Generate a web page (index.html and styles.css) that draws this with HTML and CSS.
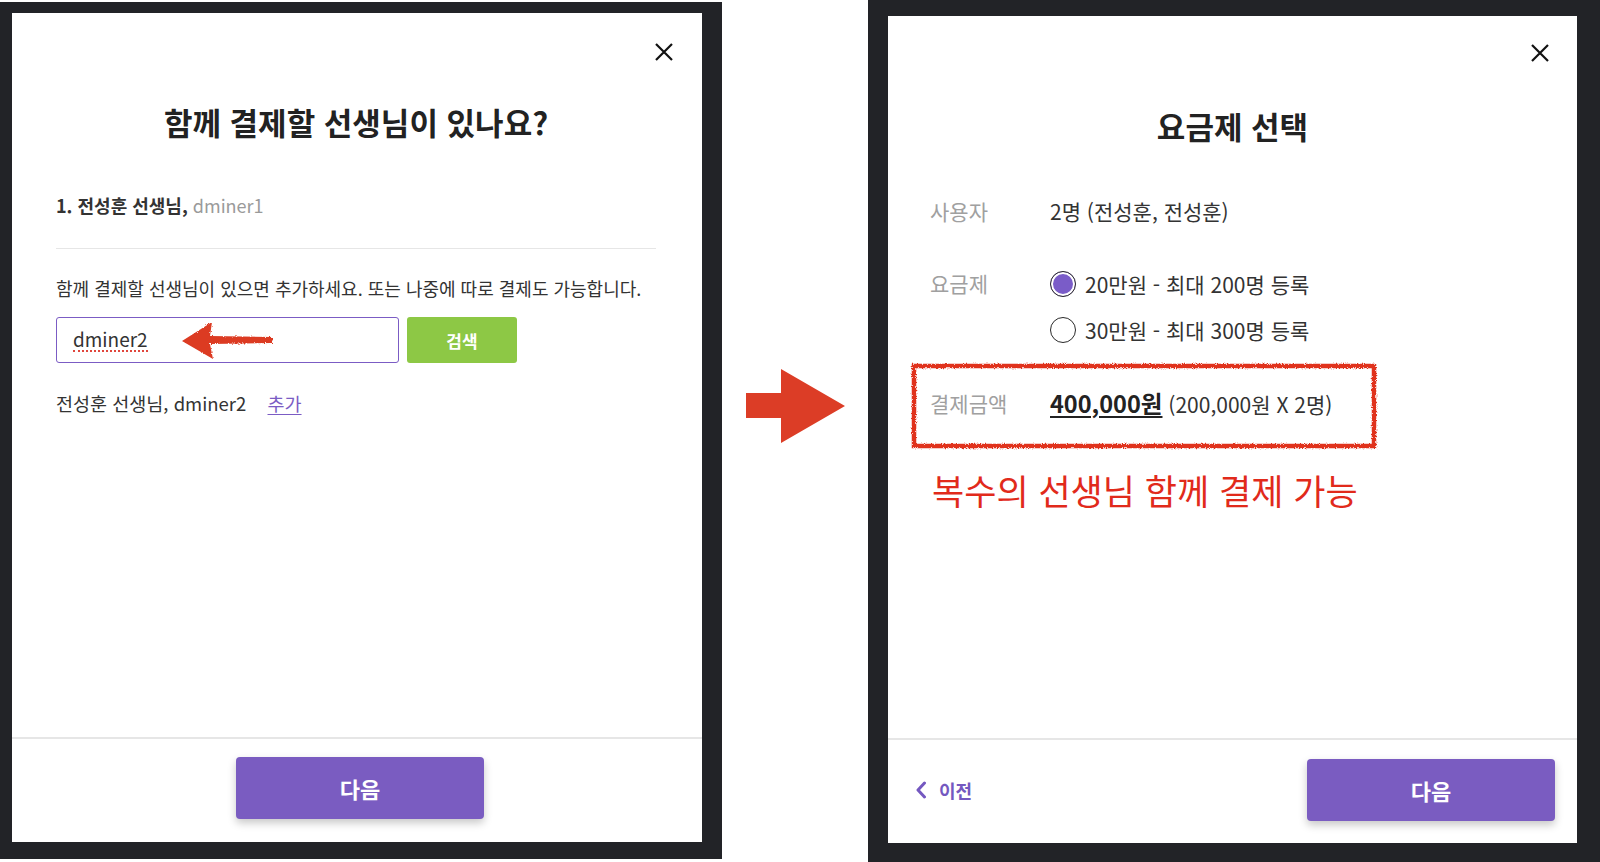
FILE: index.html
```html
<!DOCTYPE html>
<html lang="ko">
<head>
<meta charset="utf-8">
<title>결제</title>
<link rel="stylesheet" href="styles.css">
</head>
<body>
<div class="page">
  <div class="frame frame-left">
    <div class="card">
      <button class="close close-left" aria-label="닫기">
        <svg viewBox="0 0 20 20" width="20" height="20"><path d="M2 2 L18 18 M18 2 L2 18" stroke="#111" stroke-width="2.2" fill="none"/></svg>
      </button>
      <div class="card-body left-body">
        <h1 class="title">함께 결제할 선생님이 있나요?</h1>
        <div class="teacher-row"><strong>1. 전성훈 선생님,</strong> <span class="muted">dminer1</span></div>
        <hr class="divider">
        <p class="desc">함께 결제할 선생님이 있으면 추가하세요. 또는 나중에 따로 결제도 가능합니다.</p>
        <div class="search-row">
          <div class="input">
            <span class="typed">dminer2</span>
            <svg class="scribble" viewBox="0 0 96 42" width="96" height="42">
              <defs>
                <filter id="rough1" x="-10%" y="-20%" width="120%" height="140%">
                  <feTurbulence type="fractalNoise" baseFrequency="0.9" numOctaves="2" result="n"/>
                  <feDisplacementMap in="SourceGraphic" in2="n" scale="3"/>
                </filter>
              </defs>
              <path d="M3 22 L33 3 L31 17 L94 18 L93 24 L31 25 L34 40 Z" fill="#dc3a22" filter="url(#rough1)"/>
            </svg>
          </div>
          <button class="btn-search">검색</button>
        </div>
        <div class="result-row">전성훈 선생님, dminer2 <a class="add" href="#">추가</a></div>
      </div>
      <div class="card-footer footer-center">
        <button class="btn-primary btn-left">다음</button>
      </div>
    </div>
  </div>

  <div class="gap">
    <svg viewBox="0 0 99 74" width="99" height="74">
      <polygon points="0,24 35,24 35,0 99,37 35,74 35,49 0,49" fill="#dc3d26"/>
    </svg>
  </div>

  <div class="frame frame-right">
    <div class="card">
      <button class="close close-right" aria-label="닫기">
        <svg viewBox="0 0 20 20" width="20" height="20"><path d="M2 2 L18 18 M18 2 L2 18" stroke="#111" stroke-width="2.2" fill="none"/></svg>
      </button>
      <div class="card-body right-body">
        <h1 class="title">요금제 선택</h1>
        <div class="info-row first-row">
          <span class="label">사용자</span>
          <span class="value">2명 (전성훈, 전성훈)</span>
        </div>
        <div class="info-row plan-row">
          <span class="label">요금제</span>
          <div class="options">
            <label class="radio-opt"><span class="radio checked"></span>20만원 - 최대 200명 등록</label>
            <label class="radio-opt"><span class="radio"></span>30만원 - 최대 300명 등록</label>
          </div>
        </div>
        <div class="amount-row">
          <svg class="annot-box" viewBox="0 0 468 88" width="468" height="88">
            <defs>
              <filter id="rough2" x="-5%" y="-10%" width="110%" height="120%">
                <feTurbulence type="fractalNoise" baseFrequency="1.1" numOctaves="2" result="n"/>
                <feDisplacementMap in="SourceGraphic" in2="n" scale="3.5"/>
              </filter>
            </defs>
            <rect x="4" y="4" width="460" height="80" fill="none" stroke="#e0301e" stroke-width="4.5" filter="url(#rough2)"/>
          </svg>
          <span class="label">결제금액</span>
          <span class="value"><span class="amount">400,000원</span> (200,000원 X 2명)</span>
        </div>
        <p class="note">복수의 선생님 함께 결제 가능</p>
      </div>
      <div class="card-footer footer-split">
        <a class="back" href="#">
          <svg viewBox="0 0 12 18" width="12" height="18"><path d="M9.5 2 L3 9 L9.5 16" stroke="#7458c0" stroke-width="3" fill="none" stroke-linecap="round" stroke-linejoin="round"/></svg>
          <span>이전</span>
        </a>
        <button class="btn-primary">다음</button>
      </div>
    </div>
  </div>
</div>
</body>
</html>
```

FILE: styles.css
```css
* { box-sizing: border-box; }

html, body {
  margin: 0;
  padding: 0;
  background: #ffffff;
}

body {
  font-family: "Noto Sans CJK KR", "Noto Sans", sans-serif;
  color: #333;
}

.page {
  display: flex;
  width: 1600px;
  height: 862px;
  overflow: hidden;
}

.frame {
  background: #222327;
  display: flex;
}

.frame-left {
  width: 722px;
  height: 857px;
  margin-top: 2px;
  padding: 11px 20px 17px 12px;
}

.frame-right {
  width: 732px;
  height: 862px;
  padding: 16px 23px 19px 20px;
}

.gap {
  width: 146px;
  padding: 369px 0 0 24px;
}

.card {
  flex: 1;
  background: #fff;
  display: flex;
  flex-direction: column;
  position: relative;
}

.card-body {
  flex: 1;
}

.close {
  position: absolute;
  width: 20px;
  height: 20px;
  padding: 0;
  border: 0;
  background: none;
  cursor: pointer;
}

.close svg { display: block; }

.close-left { top: 29px; right: 28px; }
.close-right { top: 27px; right: 27px; }

.title {
  margin: 0;
  font-size: 31px;
  line-height: 40px;
  font-weight: 700;
  text-align: center;
  color: #222;
}

/* left card */
.left-body {
  padding: 89px 46px 0 44px;
}

.teacher-row {
  margin-top: 51px;
  font-size: 18px;
  line-height: 24px;
  color: #333;
}

.teacher-row strong {
  font-weight: 700;
}

.muted {
  color: #9a9a9a;
}

.divider {
  margin: 31px 0 0;
  border: 0;
  border-top: 1px solid #e6e6e6;
  height: 0;
}

.desc {
  margin: 27px 0 0;
  font-size: 18px;
  line-height: 24px;
  color: #333;
}

.search-row {
  display: flex;
  gap: 8px;
  margin-top: 17px;
  height: 46px;
}

.input {
  position: relative;
  width: 343px;
  height: 46px;
  border: 1px solid #7b5cc4;
  border-radius: 3px;
  padding-left: 16px;
  display: flex;
  align-items: center;
  font-size: 19px;
  color: #333;
}

.typed {
  line-height: 22px;
  border-bottom: 2px dotted #e0463c;
}

.scribble {
  position: absolute;
  left: 122px;
  top: 1px;
}

.btn-search {
  width: 110px;
  height: 46px;
  border: 0;
  border-radius: 3px;
  background: #8dc845;
  color: #fff;
  font-family: inherit;
  font-size: 17px;
  font-weight: 700;
}

.result-row {
  margin-top: 28px;
  font-size: 18.5px;
  line-height: 24px;
  color: #333;
}

.add {
  margin-left: 16px;
  color: #7b5cc4;
  text-decoration: underline;
  text-underline-offset: 3px;
}

/* footers */
.card-footer {
  border-top: 2px solid #e6e6e6;
  display: flex;
  align-items: center;
}

.footer-center {
  justify-content: center;
  padding: 18px 0 23px;
}

.footer-split {
  justify-content: space-between;
  padding: 19px 22px 22px 27px;
}

.btn-primary {
  width: 248px;
  height: 62px;
  border: 0;
  border-radius: 4px;
  background: #7a5cc1;
  color: #fff;
  font-family: inherit;
  font-size: 22px;
  font-weight: 700;
  box-shadow: 0 4px 8px rgba(0, 0, 0, 0.22);
}

.btn-left {
  margin-left: 6px;
}

.back {
  display: flex;
  align-items: center;
  gap: 12px;
  color: #7458c0;
  text-decoration: none;
  font-size: 18px;
  font-weight: 700;
}

.back svg { display: block; }

/* right card */
.right-body {
  padding: 90px 42px 0 42px;
}

.info-row {
  display: flex;
  font-size: 21px;
  line-height: 28px;
}

.label {
  width: 120px;
  flex: none;
  color: #a0a0a0;
}

.value {
  color: #333;
}

.first-row {
  margin-top: 51px;
  align-items: center;
}

.plan-row {
  margin-top: 44px;
  align-items: flex-start;
}

.plan-row .label {
  line-height: 28px;
}

.options {
  display: flex;
  flex-direction: column;
  gap: 16px;
}

.radio-opt {
  display: flex;
  align-items: center;
  gap: 9px;
  height: 30px;
  color: #333;
}

.radio {
  width: 26px;
  height: 26px;
  border-radius: 50%;
  border: 1.5px solid #2a2a2a;
  background: #fff;
  flex: none;
}

.radio.checked {
  background: #7a5cc8;
  box-shadow: inset 0 0 0 2px #fff;
}

.amount-row {
  position: relative;
  display: flex;
  align-items: center;
  margin: 18px 0 0 -19px;
  width: 466px;
  height: 86px;
  padding: 0 0 6px 19px;
  font-size: 21px;
}

.annot-box {
  position: absolute;
  left: -1px;
  top: -1px;
}

.amount-row .label {
  line-height: 26px;
}

.amount {
  font-size: 23.5px;
  font-weight: 700;
  color: #222;
  text-decoration: underline;
  text-underline-offset: 3px;
}

.note {
  margin: 18px 0 0 2px;
  font-size: 35px;
  line-height: 46px;
  color: #e12a1b;
}
```
